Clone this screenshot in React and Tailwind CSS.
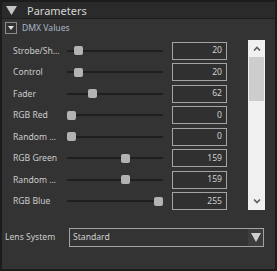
import React from 'react';

const rows = [
    { label: 'Strobe/Shutter', value: 20 },
    { label: 'Control', value: 20 },
    { label: 'Fader', value: 62 },
    { label: 'RGB Red', value: 0 },
    { label: 'Random Red', value: 0 },
    { label: 'RGB Green', value: 159 },
    { label: 'Random Green', value: 159 },
    { label: 'RGB Blue', value: 255 },
];

const font = { fontFamily: '"Noto Sans", "Open Sans", sans-serif' };

const Row = ({ label, value }) => (
    <div className="flex items-center h-[21.5px]">
        <div className="w-[65px] shrink-0 pl-[11px]">
            <div className="w-[47px] truncate whitespace-nowrap text-[8.6px] leading-[12px] text-[#cccccc]">{label}</div>
        </div>
        <div className="relative w-[96px] shrink-0 h-[9px] flex items-center">
            <div className="w-full h-[2px] bg-[#1f1f1f]" />
            <div
                className="absolute top-0 w-[9px] h-[9px] rounded-[2px] bg-[#b3b3b3]"
                style={{ left: `${(value / 255) * 87}px` }}
            />
        </div>
        <div className="ml-[9px] shrink-0 w-[55px] h-[18px] border border-[#a3a3a3] bg-[#303030] flex items-center justify-end pr-[4px] text-[8.6px] leading-none text-[#d0d0d0]">
            {value}
        </div>
    </div>
);

const App = () => {
    return (
        <div className="w-[277px] h-[271px] border-2 border-[#1c1c1c] bg-[#333333] flex flex-col overflow-hidden" style={font}>
            <div className="h-[17px] shrink-0 bg-[#2a2a2a] border-b border-[#1e1e1e] flex items-center">
                <svg width="11" height="9" viewBox="0 0 11 9" className="ml-[4px]">
                    <polygon points="0,0 11,0 5.5,9" fill="#c4c4c4" />
                </svg>
                <span className="ml-[10px] text-[11px] leading-none text-[#d4d4d4]">Parameters</span>
            </div>

            <div className="flex items-center mt-[3px] pl-[3px] h-[12px]">
                <div className="w-[12px] h-[12px] border border-[#8c8c8c] flex items-center justify-center">
                    <svg width="6" height="4" viewBox="0 0 6 4">
                        <polygon points="0,0 6,0 3,4" fill="#e0e0e0" />
                    </svg>
                </div>
                <span className="ml-[5px] text-[8.6px] leading-none text-[#a8b8c8]">DMX Values</span>
            </div>

            <div className="flex mt-[6px]">
                <div className="w-[246px] shrink-0">
                    {rows.map((r) => (
                        <Row key={r.label} label={r.label} value={r.value} />
                    ))}
                </div>
                <div className="w-[17px] h-[170px] shrink-0 bg-[#f0f0f0] flex flex-col">
                    <div className="h-[17px] flex items-center justify-center">
                        <svg width="8" height="5" viewBox="0 0 8 5">
                            <polyline points="1,4.5 4,1.5 7,4.5" fill="none" stroke="#5c5c5c" strokeWidth="1.6" />
                        </svg>
                    </div>
                    <div className="h-[44px] mx-[1px] bg-[#cdcdcd]" />
                    <div className="flex-1" />
                    <div className="h-[17px] flex items-center justify-center">
                        <svg width="8" height="5" viewBox="0 0 8 5">
                            <polyline points="1,0.5 4,3.5 7,0.5" fill="none" stroke="#5c5c5c" strokeWidth="1.6" />
                        </svg>
                    </div>
                </div>
            </div>

            <div className="flex items-center mt-[16px] pl-[3px]">
                <span className="w-[64px] shrink-0 whitespace-nowrap text-[8.6px] leading-none text-[#cccccc]">Lens System</span>
                <div className="w-[195px] shrink-0 h-[19px] border border-[#a3a3a3] bg-[#333333] flex items-center">
                    <span className="flex-1 pl-[3px] text-[8.6px] leading-none text-[#d0d0d0]">Standard</span>
                    <div className="w-[15px] h-full bg-[#3d3d3d] flex items-center justify-center">
                        <svg width="10" height="9" viewBox="0 0 10 9">
                            <polygon points="0,0 10,0 5,9" fill="#cfcfcf" />
                        </svg>
                    </div>
                </div>
            </div>
        </div>
    );
};

export default App;
